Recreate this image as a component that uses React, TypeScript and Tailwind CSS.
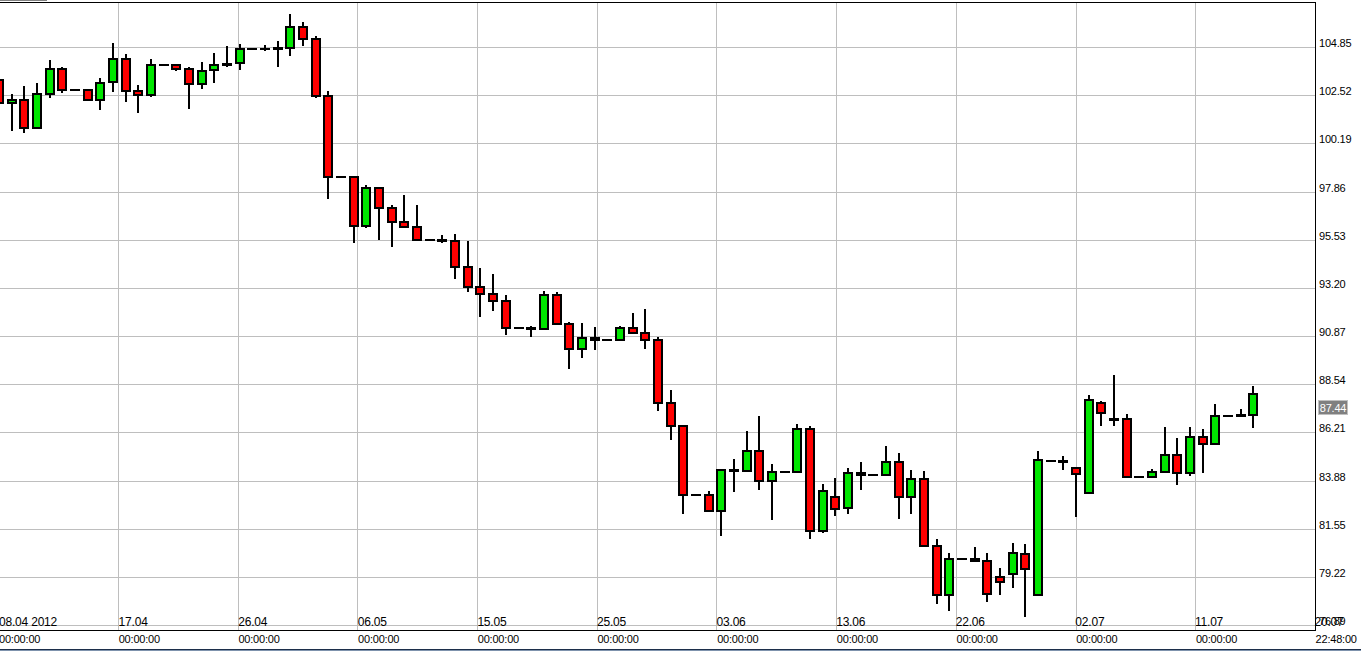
type Candle = [number, number, number, number, number, 'r' | 'g' | 'd'];

// cx, wick top, wick bottom, body top, body bottom, kind (d = flat doji bar)
const candles: Candle[] = [
  [-1, 79, 104, 79, 104, 'r'],
  [12, 94, 131, 99, 104, 'g'],
  [24, 86, 133, 99, 129, 'r'],
  [37, 83, 129, 93, 129, 'g'],
  [50, 60, 98, 68, 95, 'g'],
  [62, 67, 93, 68, 91, 'r'],
  [75, 89, 91, 89, 91, 'd'],
  [88, 89, 101, 89, 101, 'r'],
  [100, 78, 110, 82, 101, 'g'],
  [113, 43, 92, 58, 83, 'g'],
  [126, 54, 102, 58, 92, 'r'],
  [138, 85, 113, 90, 96, 'r'],
  [151, 59, 97, 64, 96, 'g'],
  [164, 64, 66, 64, 66, 'd'],
  [176, 64, 71, 64, 70, 'r'],
  [189, 67, 109, 68, 85, 'r'],
  [202, 62, 89, 70, 85, 'g'],
  [214, 53, 83, 64, 71, 'g'],
  [227, 46, 67, 63, 66, 'd'],
  [240, 44, 70, 48, 64, 'g'],
  [252, 48, 50, 48, 50, 'd'],
  [265, 45, 51, 48, 50, 'd'],
  [278, 41, 67, 47, 50, 'd'],
  [290, 14, 56, 26, 49, 'g'],
  [303, 22, 46, 26, 40, 'r'],
  [316, 36, 98, 38, 97, 'r'],
  [328, 91, 199, 95, 178, 'r'],
  [341, 176, 178, 176, 178, 'd'],
  [354, 176, 243, 176, 227, 'r'],
  [366, 185, 228, 187, 227, 'g'],
  [379, 187, 240, 187, 209, 'r'],
  [392, 205, 247, 207, 223, 'r'],
  [404, 195, 228, 221, 228, 'r'],
  [417, 205, 241, 226, 241, 'r'],
  [430, 239, 241, 239, 241, 'd'],
  [442, 235, 243, 239, 242, 'd'],
  [455, 234, 279, 240, 268, 'r'],
  [468, 241, 292, 266, 288, 'r'],
  [480, 268, 317, 286, 295, 'r'],
  [493, 274, 311, 293, 302, 'r'],
  [506, 295, 335, 300, 329, 'r'],
  [519, 327, 329, 327, 329, 'd'],
  [531, 326, 337, 327, 330, 'd'],
  [544, 291, 330, 294, 330, 'g'],
  [557, 292, 325, 294, 325, 'r'],
  [569, 322, 369, 323, 350, 'r'],
  [582, 323, 358, 337, 350, 'g'],
  [595, 327, 350, 337, 341, 'd'],
  [607, 339, 341, 339, 341, 'd'],
  [620, 326, 341, 327, 341, 'g'],
  [633, 313, 334, 327, 334, 'r'],
  [645, 309, 349, 332, 341, 'r'],
  [658, 337, 411, 339, 404, 'r'],
  [671, 390, 440, 402, 427, 'r'],
  [683, 425, 514, 425, 496, 'r'],
  [696, 494, 496, 494, 496, 'd'],
  [709, 491, 512, 494, 512, 'r'],
  [721, 469, 536, 469, 512, 'g'],
  [734, 459, 492, 469, 472, 'd'],
  [747, 431, 472, 450, 472, 'g'],
  [759, 416, 490, 450, 482, 'r'],
  [772, 464, 520, 471, 482, 'g'],
  [785, 471, 473, 471, 473, 'd'],
  [797, 424, 473, 428, 473, 'g'],
  [810, 426, 539, 428, 532, 'r'],
  [823, 484, 533, 490, 532, 'g'],
  [835, 478, 516, 496, 510, 'r'],
  [848, 468, 514, 472, 509, 'g'],
  [861, 462, 490, 472, 476, 'd'],
  [873, 474, 476, 474, 476, 'd'],
  [886, 446, 476, 461, 476, 'g'],
  [899, 453, 519, 461, 498, 'r'],
  [911, 470, 514, 478, 498, 'g'],
  [924, 471, 547, 478, 547, 'r'],
  [937, 539, 604, 545, 596, 'r'],
  [949, 553, 611, 558, 596, 'g'],
  [962, 558, 560, 558, 560, 'd'],
  [975, 547, 562, 558, 562, 'd'],
  [987, 553, 602, 560, 595, 'r'],
  [1000, 568, 595, 576, 583, 'r'],
  [1013, 543, 588, 552, 575, 'g'],
  [1025, 544, 617, 553, 570, 'r'],
  [1038, 451, 596, 459, 596, 'g'],
  [1051, 460, 462, 460, 462, 'd'],
  [1063, 456, 470, 460, 463, 'd'],
  [1076, 467, 517, 467, 475, 'r'],
  [1089, 395, 494, 399, 494, 'g'],
  [1101, 401, 426, 402, 414, 'r'],
  [1114, 375, 426, 418, 421, 'd'],
  [1127, 414, 478, 418, 478, 'r'],
  [1139, 476, 478, 476, 478, 'd'],
  [1152, 469, 478, 471, 478, 'g'],
  [1165, 427, 473, 454, 473, 'g'],
  [1177, 438, 485, 454, 474, 'r'],
  [1190, 427, 476, 436, 474, 'g'],
  [1203, 429, 473, 436, 445, 'r'],
  [1215, 404, 445, 415, 445, 'g'],
  [1228, 415, 417, 415, 417, 'd'],
  [1241, 409, 417, 414, 417, 'd'],
  [1253, 386, 428, 393, 416, 'g'],
];

const hLines = [47, 95, 143, 192, 240, 288, 336, 384, 432, 481, 529, 577, 625];
const vLines = [118, 238, 357, 477, 597, 716, 836, 956, 1076, 1195];
const prices = ['104.85', '102.52', '100.19', '97.86', '95.53', '93.20', '90.87', '88.54', '86.21', '83.88', '81.55', '79.22', '76.89'];
const dates = ['08.04 2012', '17.04', '26.04', '06.05', '15.05', '25.05', '03.06', '13.06', '22.06', '02.07', '11.07', '20.07'];

function Chart() {
  return (
    <svg width="1315" height="627" viewBox="0 3 1315 627" shapeRendering="crispEdges" className="block">
      {hLines.map((y) => (
        <rect key={y} x="0" y={y} width="1315" height="1" fill="#bebebe" />
      ))}
      {vLines.map((x) => (
        <rect key={x} x={x} y="3" width="1" height="627" fill="#bebebe" />
      ))}
      {candles.map(([cx, wt, wb, bt, bb, kind]) =>
        kind === 'd' ? (
          <g key={cx} fill="#000">
            <rect x={cx - 1} y={wt} width="2" height={wb - wt} />
            <rect x={cx - 5} y={bt} width="10" height={bb - bt} />
          </g>
        ) : (
          <g key={cx}>
            <rect x={cx - 1} y={wt} width="2" height={wb - wt} fill="#000" />
            <rect
              x={cx - 4}
              y={bt + 1}
              width="8"
              height={bb - bt - 2}
              fill={kind === 'r' ? '#ff0000' : '#00e600'}
              stroke="#000"
              strokeWidth="2"
            />
          </g>
        ),
      )}
    </svg>
  );
}

export default function App() {
  return (
    <div className="w-[1361px] h-[651px] overflow-hidden flex flex-col bg-white text-black font-['Liberation_Sans',sans-serif] text-[11px] leading-[12px] tracking-[-0.2px]">
      <div className="w-[47px] h-px mb-px bg-[#808080]" />
      <div className="flex h-[629px]">
        <div className="relative w-[1316px] border-t border-r border-b border-black">
          <Chart />
          {/* date ticks sit on top of the plot */}
          <div className="absolute left-[-1px] top-[612px] flex text-[12px] leading-[14px] whitespace-nowrap">
            {dates.map((d) => (
              <div key={d} className="w-[119.6px] shrink-0">
                {d}
              </div>
            ))}
          </div>
        </div>
        <div className="relative flex-1 pl-[3px] pt-[35px]">
          {prices.map((p) => (
            <div key={p} className="h-[48.18px]">
              {p}
            </div>
          ))}
          <div className="absolute left-[2px] top-[398px] w-[30px] h-[15px] flex items-center justify-center bg-[#808080] border border-[#c0c0c0] text-white">
            87.44
          </div>
        </div>
      </div>
      <div className="h-[16px] flex items-center -ml-px whitespace-nowrap">
        {Array.from({ length: 12 }, (_, i) => (
          <div key={i} className="w-[119.7px] shrink-0">
            {i === 11 ? '22:48:00' : '00:00:00'}
          </div>
        ))}
      </div>
      <div className="h-[4px] pt-[2px]">
        <div className="h-[2px] border-t border-[#1c2e4a] bg-[#7f93ad]" />
      </div>
    </div>
  );
}
